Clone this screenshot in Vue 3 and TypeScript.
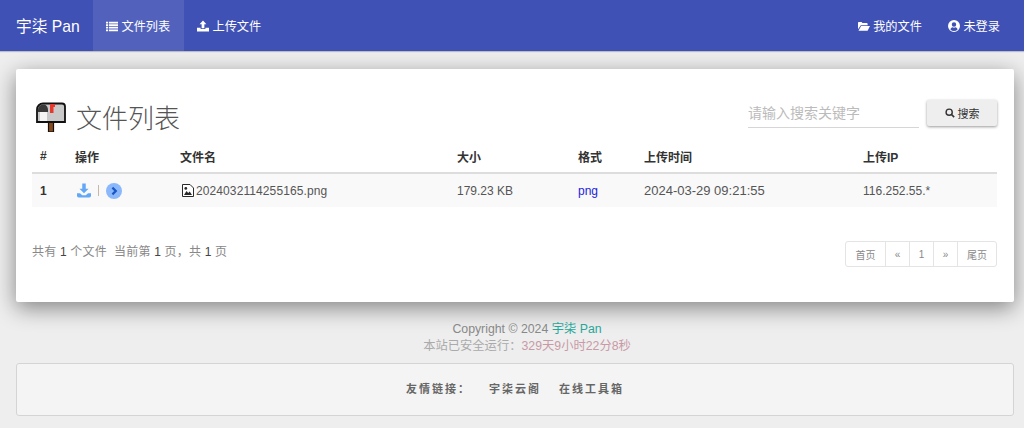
<script setup lang="ts">
const columns = ['#', '操作', '文件名', '大小', '格式', '上传时间', '上传IP']
const widths = [35, 105, 277, 121, 66, 219, 142]
const file = {
  id: 1,
  name: '2024032114255165.png',
  size: '179.23 KB',
  ext: 'png',
  time: '2024-03-29 09:21:55',
  ip: '116.252.55.*',
}
</script>

<template>
  <nav class="navbar">
    <a class="brand">宇柒 Pan</a>
    <a class="nav-item active">
      <svg class="ico" viewBox="0 0 14 12"><path d="M0 1h2.5v2H0zM3.5 1H14v2H3.5zM0 4h2.5v2H0zM3.5 4H14v2H3.5zM0 7h2.5v2H0zM3.5 7H14v2H3.5zM0 10h2.5v2H0zM3.5 10H14v2H3.5z" /></svg>
      文件列表
    </a>
    <a class="nav-item">
      <svg class="ico" viewBox="0 0 14 13"><path d="M7 0l4 4.4H8.6V9H5.4V4.4H3zM0 8.5h4.2V10h5.6V8.5H14V13H0z" /></svg>
      上传文件
    </a>
    <div class="nav-right">
      <a class="nav-item">
        <svg class="ico" viewBox="0 0 15 12"><path d="M0 2a1 1 0 0 1 1-1h3.5l1 1.4H11a1 1 0 0 1 1 1V5H3.5L0 10zM3.9 6H15l-3 6H0.6z" /></svg>
        我的文件
      </a>
      <a class="nav-item">
        <svg class="ico" viewBox="0 0 14 14"><path fill-rule="evenodd" d="M7 0a7 7 0 1 1 0 14A7 7 0 0 1 7 0zm0 2.6a2.6 2.6 0 1 0 0 5.2 2.6 2.6 0 0 0 0-5.2zM2.8 11a5.6 5.6 0 0 0 8.4 0c-.5-1.4-1.4-2.2-2.4-2.4-1.1.7-2.5.7-3.6 0-1 .2-1.9 1-2.4 2.4z" /></svg>
        未登录
      </a>
    </div>
  </nav>

  <main class="card">
    <div class="card-head">
      <h1 class="title">
        <svg class="mailbox" viewBox="0 0 30 30">
          <rect x="12.5" y="20" width="5" height="10" fill="#8a4b1c" stroke="#111" stroke-width="1.2" />
          <path d="M7 1.5h19a3 3 0 0 1 3 3V20H1V7.5a6 6 0 0 1 6-6z" fill="#c9c9c9" stroke="#111" stroke-width="1.8" />
          <path d="M4 10h7v9H4z" fill="#f4f4f4" />
          <path d="M2 8a5 5 0 0 1 5-5.5c3 0 5 2 5 5.5v2H2z" fill="#3a3a3a" />
          <path d="M14 2h5v3h-1.500v6H14z" fill="#e8372c" />
        </svg>
        <span>文件列表</span>
      </h1>
      <div class="search">
        <input class="search-input" type="text" placeholder="请输入搜索关键字" />
        <button class="search-btn" type="button">
          <svg class="ico-search" viewBox="0 0 12 12"><circle cx="5" cy="5" r="3.7" fill="none" stroke="#333" stroke-width="1.7" /><path d="M7.8 7.8L11 11" stroke="#333" stroke-width="2" /></svg>
          搜索
        </button>
      </div>
    </div>

    <table class="files">
      <colgroup>
        <col v-for="(w, i) in widths" :key="i" :style="{ width: w + 'px' }" />
      </colgroup>
      <thead>
        <tr>
          <th v-for="c in columns" :key="c">{{ c }}</th>
        </tr>
      </thead>
      <tbody>
        <tr>
          <td class="strong">{{ file.id }}</td>
          <td>
            <span class="ops">
              <svg class="op-dl" viewBox="0 0 16 16"><path fill="#62a8f6" d="M6 0h4v6h3.2L8 11 2.8 6H6zM0 11h3.400L6 13.500h4L12.600 11H16v3a2 2 0 0 1-2 2H2a2 2 0 0 1-2-2z" /></svg>
              <i class="sep"></i>
              <svg class="op-go" viewBox="0 0 16 16"><circle cx="8" cy="8" r="8" fill="#8ab8fb" /><path d="M6.4 4.6L9.800 8l-3.4 3.4" fill="none" stroke="#1a56c4" stroke-width="2.2" /></svg>
            </span>
          </td>
          <td>
            <span class="fname">
              <svg class="op-file" viewBox="0 0 12 13"><path fill="#fff" stroke="#2a2a2a" d="M.5.5H8L11.500 4v8.500H.5z" /><path fill="#2a2a2a" d="M2 11l2.500-4 1.700 2 1.500-1.500 2.300 3.500z" /><circle cx="3.800" cy="4.400" r="1.400" fill="#2a2a2a" /></svg>{{ file.name }}
            </span>
          </td>
          <td>{{ file.size }}</td>
          <td><a class="ext">{{ file.ext }}</a></td>
          <td class="time">{{ file.time }}</td>
          <td>{{ file.ip }}</td>
        </tr>
      </tbody>
    </table>

    <div class="pager-row">
      <p class="summary">共有 <em>1</em> 个文件&nbsp; 当前第 <em>1</em> 页，共 <em>1</em> 页</p>
      <ul class="pager">
        <li>首页</li>
        <li class="sm">«</li>
        <li class="sm">1</li>
        <li class="sm">»</li>
        <li>尾页</li>
      </ul>
    </div>
  </main>

  <footer class="foot">
    <p>Copyright © 2024 <a class="site">宇柒 Pan</a></p>
    <p class="uptime">本站已安全运行：<span class="pink">329天9小时22分8秒</span></p>
  </footer>

  <section class="links">
    <span class="links-label">友情链接：</span>
    <a>宇柒云阁</a>
    <a>在线工具箱</a>
  </section>
</template>

<style>
html,
body {
  margin: 0;
  background: #eeeeee;
}
</style>

<style scoped>
* {
  box-sizing: border-box;
}

.navbar,
.card,
.foot,
.links {
  font-family: "Liberation Sans", "Noto Sans CJK SC", sans-serif;
}

.navbar {
  display: flex;
  align-items: stretch;
  height: 51px;
  background: #3f51b5;
  color: #fff;
  box-shadow: 0 1px 1px rgba(0, 0, 0, 0.2);
}

.brand {
  display: flex;
  align-items: center;
  width: 93px;
  padding-left: 16px;
  padding-bottom: 1px;
  font-size: 15.7px;
}

.nav-item {
  display: flex;
  align-items: center;
  gap: 3.5px;
  padding: 0 13px;
  font-size: 12.2px;
}

.nav-item.active {
  width: 91px;
  background: #5262bc;
}

.nav-right {
  display: flex;
  margin-left: auto;
  padding-right: 11px;
}

.ico {
  width: 12px;
  height: 12px;
  fill: #fff;
}

.card {
  margin: 18px 10px 0 16px;
  height: 233px;
  padding: 0 17px 0 16px;
  background: #fff;
  border-radius: 2px;
  box-shadow: 0 6px 22px rgba(0, 0, 0, 0.45);
}

.card-head {
  display: flex;
  justify-content: space-between;
  height: 71px;
}

.title {
  display: flex;
  align-items: center;
  gap: 10px;
  margin: 28px 0 0;
  height: 38px;
  font-size: 26px;
  font-weight: 300;
  color: #555;
}

.mailbox {
  width: 30px;
  height: 30px;
  margin-left: 4px;
  margin-top: 2px;
}

.search {
  display: flex;
  align-items: flex-start;
  gap: 8px;
  margin-top: 30px;
}

.search-input {
  width: 171px;
  height: 29px;
  padding: 0;
  border: 0;
  border-bottom: 1px solid #d6d6d6;
  outline: 0;
  background: transparent;
  font-family: inherit;
  font-size: 14px;
}

.search-input::placeholder {
  color: #bbb;
}

.search-btn {
  display: flex;
  align-items: center;
  justify-content: center;
  gap: 3px;
  width: 70px;
  height: 26px;
  margin-top: 1px;
  border: 0;
  border-radius: 2px;
  background: #eeeeee;
  box-shadow: 0 1px 3px rgba(0, 0, 0, 0.4);
  color: #333;
  font-family: inherit;
  font-size: 11px;
}

.ico-search {
  width: 10px;
  height: 10px;
}

.files {
  width: 965px;
  border-collapse: collapse;
  table-layout: fixed;
  font-size: 12px;
  color: #555;
}

.files th {
  height: 33px;
  padding: 0 8px;
  border-bottom: 2px solid #dddddd;
  text-align: left;
  font-size: 12px;
  font-weight: 700;
  color: #333;
}

.files td {
  height: 34px;
  padding: 0 8px;
  background: #f9f9f9;
}

.strong {
  font-weight: 700;
  color: #333;
}

.files td.time {
  font-size: 13px;
}

.ops {
  display: flex;
  align-items: center;
  gap: 7px;
  padding-left: 2px;
}

.op-dl {
  width: 14px;
  height: 15px;
}

.sep {
  width: 1px;
  height: 11px;
  background: #c7b8a4;
}

.op-go {
  width: 16px;
  height: 16px;
}

.fname {
  display: flex;
  align-items: center;
  padding-left: 2px;
  letter-spacing: 0.1px;
}

.op-file {
  width: 12px;
  height: 13px;
  margin-right: 2px;
}

.ext {
  color: #2222dd;
}

.pager-row {
  display: flex;
  justify-content: space-between;
  margin-top: 34px;
}

.summary {
  margin: 1px 0 0;
  font-size: 12px;
  letter-spacing: 0.2px;
  color: #888;
}

.summary em {
  font-style: normal;
  color: #444;
}

.pager {
  display: flex;
  margin: 0;
  padding: 0;
  list-style: none;
  border: 1px solid #e4e4e4;
  border-radius: 3px;
  font-size: 10px;
  color: #888;
}

.pager li {
  display: flex;
  align-items: center;
  justify-content: center;
  width: 39px;
  height: 24px;
  border-left: 1px solid #e4e4e4;
}

.pager li:first-child {
  border-left: 0;
}

.pager li.sm {
  width: 24px;
}

.foot {
  margin-top: 19px;
  padding-left: 30px;
  text-align: center;
  font-size: 12.3px;
  line-height: 17px;
  color: #888;
}

.foot p {
  margin: 0;
}

.site {
  color: #26a69a;
}

.uptime {
  color: #aaa;
}

.pink {
  color: #c99aa6;
}

.links {
  display: flex;
  justify-content: center;
  align-items: center;
  gap: 18px;
  margin: 8px 10px 0 16px;
  height: 53px;
  padding-bottom: 4px;
  border: 1px solid #d4d4d4;
  border-radius: 3px;
  background: #f4f4f4;
  font-size: 11px;
  font-weight: 700;
  letter-spacing: 2px;
  color: #666;
}
</style>
